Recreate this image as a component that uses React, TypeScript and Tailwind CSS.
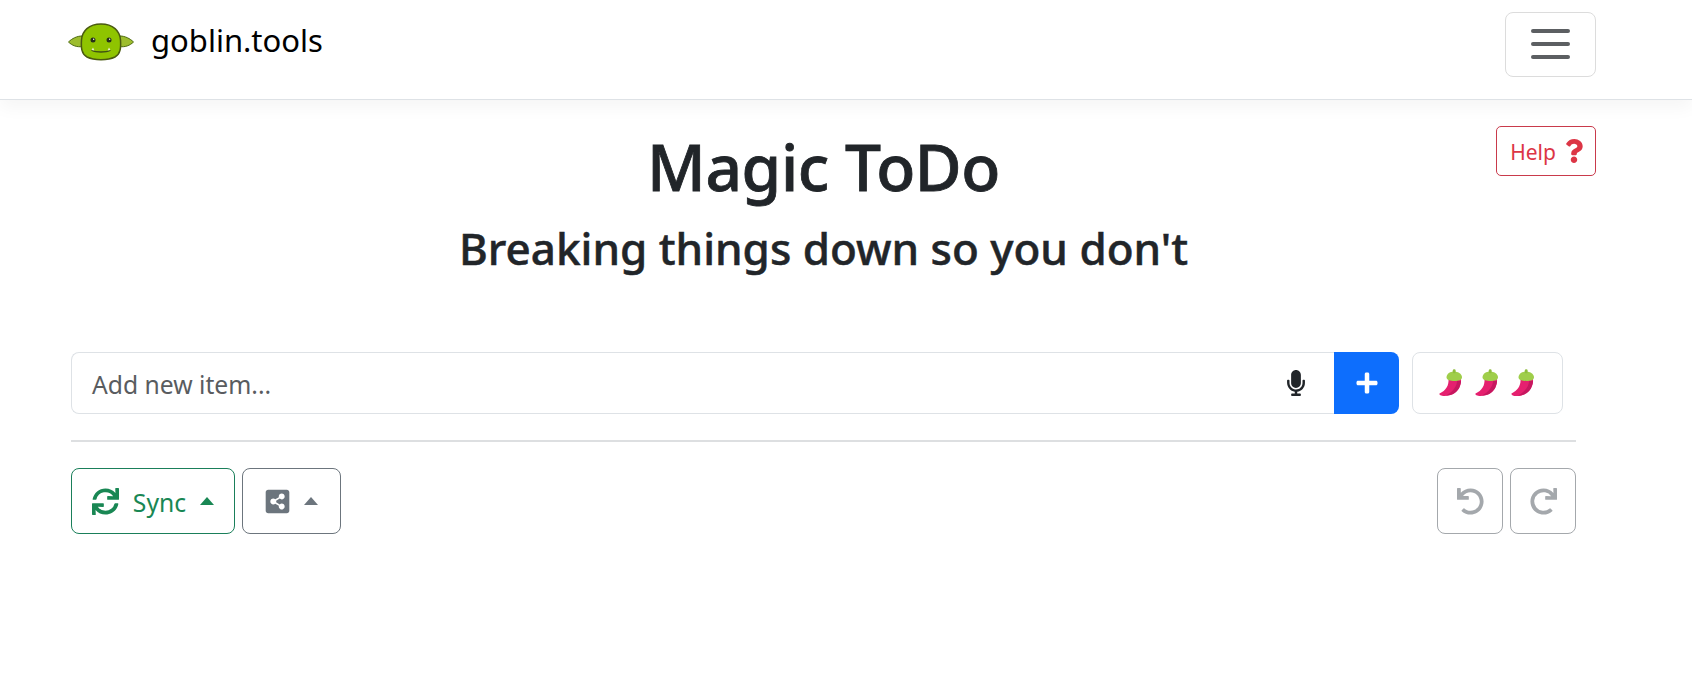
import React from "react";
import { FaSync, FaQuestion, FaMicrophone, FaPlus, FaShareAltSquare, FaUndo, FaRedo } from "react-icons/fa";

function Goblin() {
  return (
    <svg width="66" height="38" viewBox="0 0 66 38" className="shrink-0">
      <path d="M14 13 C9 13 4 15.500 0.500 19 C4 22.500 9 24.500 15 23.500 Z" fill="#9dbd2e" stroke="#4d6a10" strokeWidth="1" />
      <path d="M52 13 C57 13 62 15.500 65.500 19 C62 22.500 57 24.500 51 23.500 Z" fill="#9dbd2e" stroke="#4d6a10" strokeWidth="1" />
      <path d="M33 1 C21 1 14 8 13.500 17 C13 25 13.500 31 19 34 C26 37.500 40 37.500 47 34 C52.500 31 53 25 52.500 17 C52 8 45 1 33 1 Z" fill="#8fc400" stroke="#4a5a10" strokeWidth="1.500" />
      <circle cx="25" cy="17" r="2.500" fill="#26301a" />
      <circle cx="41" cy="17" r="2.500" fill="#26301a" />
      <circle cx="25.700" cy="16.300" r="0.700" fill="#fff" />
      <circle cx="41.700" cy="16.300" r="0.700" fill="#fff" />
      <path d="M24 27.500 C28 29.500 38 29.500 42 27.500" fill="none" stroke="#3f5212" strokeWidth="1.300" strokeLinecap="round" />
      <path d="M23.500 27 l1.500 -2.400 l1.500 3 Z M42.500 27 l-1.500 -2.400 l-1.500 3 Z" fill="#e8edc8" />
    </svg>
  );
}

function Chili() {
  return (
    <svg width="26" height="28" viewBox="0 0 26 28" className="shrink-0">
      <path d="M10.500 10 C11 16.500 8 21.500 1.500 24.500 C1 26 3 27 6.500 27 C14 27 20 23 22 17 C23 14.500 23.200 12 23 10 Z" fill="#e5206f" />
      <path d="M19 12 C19 17 15 23 8 26.500 C15 26.500 20.500 22.500 22 16.500 C22.800 14.500 23 13 23 12 Z" fill="#c6175f" />
      <path d="M8.500 8.500 C8.500 4.500 12.500 2.500 16 2.500 C19.500 2.500 24 4.500 24 8.500 C24 11 20.500 12 16.500 12 C12.500 12 8.500 11 8.500 8.500 Z" fill="#9fce4a" />
      <rect x="14.800" y="0.300" width="2.800" height="4" rx="1.300" fill="#8fbd3e" />
    </svg>
  );
}

function Caret({ className }: { className: string }) {
  return <span className={`inline-block w-0 h-0 border-x-[7.5px] border-x-transparent border-b-[8px] ${className}`} />;
}

export default function App() {
  return (
    <div className="min-h-[693px] bg-white font-['Noto_Sans','Open_Sans',sans-serif] text-[#212529]">
      <nav className="h-[100px] border-b border-[#dee2e6] bg-white flex items-center justify-between pl-[68px] pr-[96px] shadow-[0_8px_16px_rgba(0,0,0,0.04)]">
        <div className="flex items-center gap-[17px] -mt-[16px]">
          <Goblin />
          <span className="text-[31px] leading-[40px] text-black -mt-[4px]">goblin.tools</span>
        </div>
        <button className="w-[91px] h-[65px] -mt-[11px] border border-[#dcdcdc] rounded-[8px] flex flex-col items-center justify-center gap-[9px]">
          <span className="block w-[39px] h-[4px] rounded-full bg-[#5c5f62]" />
          <span className="block w-[39px] h-[4px] rounded-full bg-[#5c5f62]" />
          <span className="block w-[39px] h-[4px] rounded-full bg-[#5c5f62]" />
        </button>
      </nav>

      <main className="relative pl-[71px] pr-[116px]">
        <button className="absolute right-[96px] top-[26px] w-[100px] h-[50px] border border-[#c93a4b] rounded-[5px] text-[#dc3545] text-[21px] flex items-center justify-center gap-[6px] pl-[4px]">
          <span className="pt-[4px]">Help</span>
          <FaQuestion className="text-[24px]" />
        </button>

        <h1 className="pt-[27px] text-center text-[64px] leading-[80px] font-medium tracking-[-0.4px] [-webkit-text-stroke:0.8px_#212529]">Magic ToDo</h1>
        <h2 className="mt-[15px] text-center text-[44px] leading-[52px] font-medium [-webkit-text-stroke:0.5px_#212529]">Breaking things down so you don't</h2>

        <div className="mt-[78px] flex items-stretch h-[62px]">
          <div className="w-[1263px] border border-r-0 border-[#dee2e6] rounded-l-[8px] flex items-center justify-between pl-[20px] pr-[25px]">
            <span className="text-[24.7px] text-[#595c5f] pt-[4px]">Add new item...</span>
            <FaMicrophone className="text-[26px] text-[#212529]" />
          </div>
          <button className="w-[65px] bg-[#0d6efd] rounded-r-[8px] flex items-center justify-center text-white">
            <FaPlus className="text-[24px]" />
          </button>
          <div className="ml-[13px] w-[151px] border border-[#dee2e6] rounded-[8px] flex items-center justify-center gap-[10px] pr-[2px]">
            <Chili />
            <Chili />
            <Chili />
          </div>
        </div>

        <hr className="mt-[26px] border-0 h-[2px] bg-[#dddfe1]" />

        <div className="mt-[26px] flex justify-between">
          <div className="flex gap-[7px]">
            <button className="w-[164px] h-[66px] border border-[#1a7f5a] rounded-[8px] flex items-center justify-center text-[#198754]">
              <FaSync className="text-[27px]" />
              <span className="ml-[14px] text-[24.7px] pt-[4px]">Sync</span>
              <Caret className="ml-[14px] border-b-[#198754]" />
            </button>
            <button className="w-[99px] h-[66px] border border-[#6c757d] rounded-[8px] flex items-center justify-center text-[#6c757d] pr-[2px]">
              <FaShareAltSquare className="text-[27px]" />
              <Caret className="ml-[13px] border-b-[#6c757d]" />
            </button>
          </div>
          <div className="flex gap-[7px]">
            <button className="w-[66px] h-[66px] border border-[#a4a8ac] rounded-[8px] flex items-center justify-center text-[#a4a8ac] pt-[1px] pl-[1px]">
              <FaUndo className="text-[27px]" />
            </button>
            <button className="w-[66px] h-[66px] border border-[#a4a8ac] rounded-[8px] flex items-center justify-center text-[#a4a8ac] pt-[1px] pl-[1px]">
              <FaRedo className="text-[27px]" />
            </button>
          </div>
        </div>
      </main>
    </div>
  );
}
